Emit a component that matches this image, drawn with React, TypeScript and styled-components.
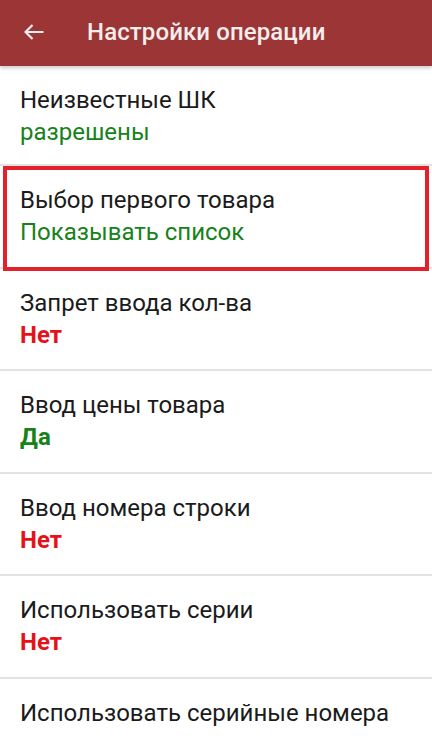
import React from "react";
import styled, { createGlobalStyle } from "styled-components";

const Global = createGlobalStyle`
  html, body {
    margin: 0;
    padding: 0;
    background: #ffffff;
    overflow: hidden;
  }
  body {
    font-family: Roboto, "Noto Sans", Arial, sans-serif;
  }
`;

const Screen = styled.div`
  width: 432px;
  height: 738px;
  overflow: hidden;
  background: #ffffff;
  display: flex;
  flex-direction: column;
`;

const AppBar = styled.header`
  position: relative;
  z-index: 2;
  height: 66px;
  flex: 0 0 66px;
  background: #9b3536;
  display: flex;
  align-items: center;
  box-shadow: 0 2px 4px rgba(0, 0, 0, 0.22);
`;

const BackButton = styled.div`
  width: 87px;
  height: 66px;
  display: flex;
  align-items: center;
  padding-left: 24px;
  padding-bottom: 2px;
  box-sizing: border-box;
`;

const Title = styled.h1`
  margin: 0 0 2px;
  font-family: Roboto, sans-serif;
  font-weight: 500;
  font-size: 24px;
  color: #f6eded;
  letter-spacing: 0.1px;
`;

const List = styled.div`
  display: flex;
  flex-direction: column;
`;

const Row = styled.div<{ $h: number }>`
  position: relative;
  height: ${(p) => p.$h}px;
  flex: 0 0 ${(p) => p.$h}px;
  border-bottom: 2px solid #e2e2e2;
  padding: 18px 20px 0;
  box-sizing: content-box;
  display: flex;
  flex-direction: column;
`;

const Label = styled.div`
  font-size: 24px;
  line-height: 32px;
  color: #1b1b1b;
  white-space: nowrap;
`;

const Value = styled.div<{ $color: string; $bold?: boolean }>`
  font-size: 24px;
  line-height: 32px;
  color: ${(p) => p.$color};
  font-weight: ${(p) => (p.$bold ? 700 : 400)};
  white-space: nowrap;
`;

const Highlight = styled.div`
  position: absolute;
  left: 3px;
  right: 3px;
  top: 0;
  bottom: -4px;
  border: 4px solid #e3212b;
  pointer-events: none;
`;

const GREEN = "#17821a";
const RED = "#e5121b";

type Item = {
  label: string;
  value?: string;
  color?: string;
  bold?: boolean;
  highlight?: boolean;
};

const items: Item[] = [
  { label: "Неизвестные ШК", value: "разрешены", color: GREEN },
  {
    label: "Выбор первого товара",
    value: "Показывать список",
    color: GREEN,
    highlight: true,
  },
  { label: "Запрет ввода кол-ва", value: "Нет", color: RED, bold: true },
  { label: "Ввод цены товара", value: "Да", color: GREEN, bold: true },
  { label: "Ввод номера строки", value: "Нет", color: RED, bold: true },
  { label: "Использовать серии", value: "Нет", color: RED, bold: true },
  { label: "Использовать серийные номера" },
];

export default function App() {
  return (
    <Screen>
      <Global />
      <AppBar>
        <BackButton>
          <svg width="20" height="16" viewBox="0 0 20 16" fill="none">
            <path
              d="M19.5 8H1.5M8.5 1L1.5 8L8.5 15"
              stroke="#f6eded"
              strokeWidth="2.2"
            />
          </svg>
        </BackButton>
        <Title>Настройки операции</Title>
      </AppBar>
      <List>
        {items.map((it, i) => (
          <Row key={i} $h={i === 0 ? 80 : 82.5}>
            <Label>{it.label}</Label>
            {it.value && (
              <Value $color={it.color || GREEN} $bold={it.bold}>
                {it.value}
              </Value>
            )}
            {it.highlight && <Highlight />}
          </Row>
        ))}
      </List>
    </Screen>
  );
}
